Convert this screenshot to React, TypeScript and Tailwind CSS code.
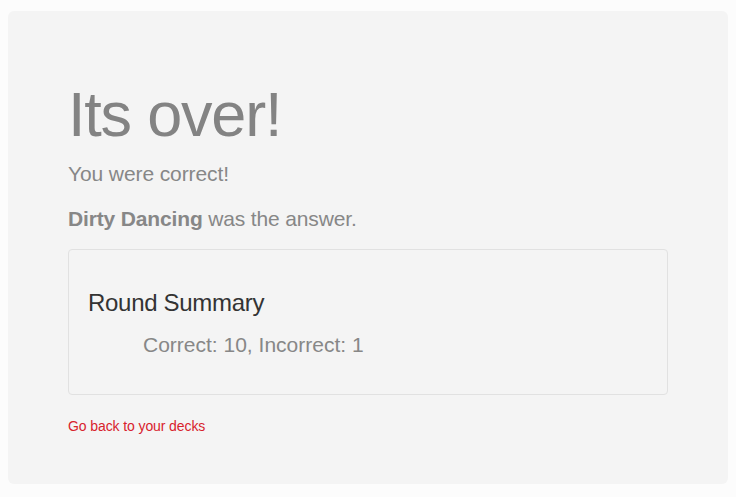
export default function App() {
  return (
    <div className="min-h-[497px] w-full bg-[#fcfcfc] pt-[11px] pb-[14px] px-[8px] font-['Liberation_Sans',Arial,sans-serif]">
      <div className="rounded-[6px] bg-[#f4f4f4] px-[60px] pt-[69px] pb-[48px]">
        {/* Heading */}
        <h1 className="m-0 text-[63px] leading-[1.1] font-light text-[#838383] tracking-[-1.2px]">
          Its over!
        </h1>
        <p className="mt-[10px] text-[21px] leading-[1.4] text-[#878787] tracking-[-0.1px]">You were correct!</p>
        <p className="mt-[15px] mb-[16px] text-[21px] leading-[1.4] text-[#878787] tracking-[-0.15px]">
          <b className="font-bold">Dirty Dancing</b> was the answer.
        </p>

        {/* Summary box */}
        <div className="rounded-[4px] border border-[#e1e1e1] pl-[19px] pr-[19px] pt-[40px] pb-[34px]">
          <h3 className="text-[24px] leading-[1.1] text-[#333333] tracking-[-0.3px]">Round Summary</h3>
          <ul className="mt-[14px] pl-[55px] list-none">
            <li className="text-[21px] leading-[1.4] text-[#878787]">Correct: 10, Incorrect: 1</li>
          </ul>
        </div>

        <a href="#" className="mt-[21px] block text-[14px] leading-[20px] text-[#d8222c] tracking-[-0.1px]">
          Go back to your decks
        </a>
      </div>
    </div>
  );
}
